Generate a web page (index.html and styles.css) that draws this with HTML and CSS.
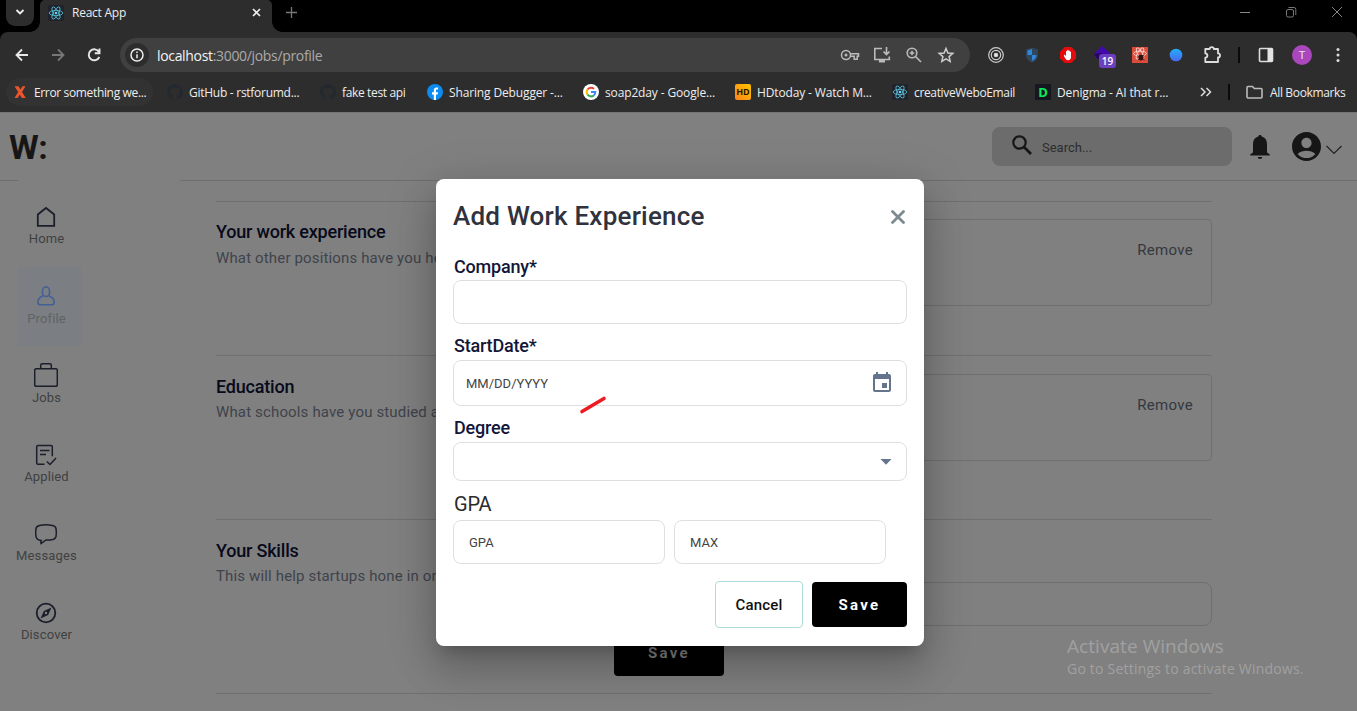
FILE: index.html
```html
<!DOCTYPE html>
<html lang="en">
<head>
<meta charset="utf-8">
<title>React App</title>
<link rel="stylesheet" href="styles.css">
</head>
<body>
<svg class="defs" width="0" height="0" aria-hidden="true">
  <symbol id="react" viewBox="0 0 16 16"><rect width="16" height="16" rx="1.5" fill="#20232a"/><g fill="none" stroke="#5cc4de" stroke-width=".8"><ellipse cx="8" cy="8" rx="6.8" ry="2.6"/><ellipse cx="8" cy="8" rx="6.8" ry="2.6" transform="rotate(60 8 8)"/><ellipse cx="8" cy="8" rx="6.8" ry="2.6" transform="rotate(120 8 8)"/></g><circle cx="8" cy="8" r="1.3" fill="#61dafb"/></symbol>
  <symbol id="github" viewBox="0 0 16 16"><path fill="#24292f" d="M8 0C3.58 0 0 3.58 0 8c0 3.54 2.29 6.53 5.47 7.59.4.07.55-.17.55-.38v-1.33c-2.23.48-2.7-1.07-2.7-1.07-.36-.93-.89-1.18-.89-1.18-.72-.5.06-.49.06-.49.8.06 1.23.83 1.23.83.71 1.22 1.87.87 2.33.66.07-.52.28-.87.5-1.07-1.77-.2-3.64-.89-3.64-3.95 0-.87.31-1.59.82-2.15-.08-.2-.36-1.02.08-2.12 0 0 .67-.21 2.2.82a7.6 7.6 0 0 1 4 0c1.53-1.04 2.2-.82 2.2-.82.44 1.1.16 1.92.08 2.12.51.56.82 1.27.82 2.15 0 3.07-1.87 3.75-3.65 3.95.29.25.54.73.54 1.48v2.19c0 .21.15.46.55.38A8 8 0 0 0 16 8c0-4.42-3.58-8-8-8z"/></symbol>
</svg>

<header class="browser">
  <div class="tabstrip">
    <div class="tab-search"><svg width="10" height="8" viewBox="0 0 10 8"><path d="M1.5 2 5 5.5 8.500 2" fill="none" stroke="#eee" stroke-width="1.8"/></svg></div>
    <div class="tab">
      <svg width="16" height="16"><use href="#react"/></svg>
      <span class="tab-title">React App</span>
      <svg class="tab-close" width="9" height="9" viewBox="0 0 9 9"><path d="M1 1l7 7M8 1L1 8" stroke="#eee" stroke-width="1.6"/></svg>
    </div>
    <svg class="tab-new" width="11" height="11" viewBox="0 0 11 11"><path d="M5.500 0v11M0 5.500h11" stroke="#777" stroke-width="1.300"/></svg>
    <div class="window-controls">
      <svg width="12" height="12" viewBox="0 0 12 12"><path d="M1 6.500h10" stroke="#888"/></svg>
      <svg width="12" height="12" viewBox="0 0 12 12" fill="none" stroke="#777"><rect x="1.500" y="3.500" width="7" height="7.500" rx="1.500"/><path d="M3.500 1.500H9a1.800 1.800 0 0 1 1.800 1.800V9"/></svg>
      <svg width="12" height="12" viewBox="0 0 12 12"><path d="M1 1l10 10M11 1 1 11" stroke="#888" stroke-width="1"/></svg>
    </div>
  </div>

  <div class="toolbar">
    <div class="nav-buttons">
      <svg width="16" height="16" viewBox="0 0 16 16" fill="none" stroke="#e8e8e8" stroke-width="1.800"><path d="M14 8H3M8 2.500 2.500 8 8 13.500"/></svg>
      <svg width="16" height="16" viewBox="0 0 16 16" fill="none" stroke="#777" stroke-width="1.800"><path d="M2 8h11M8 2.500 13.500 8 8 13.500"/></svg>
      <svg width="16" height="16" viewBox="0 0 16 16" fill="none" stroke="#e8e8e8" stroke-width="1.900"><path d="M13 5A5.500 5.500 0 1 0 13.300 10M13.500 1.500v4.700H8.800"/></svg>
    </div>
    <div class="omnibox">
      <span class="site-info"><svg width="14" height="14" viewBox="0 0 14 14"><circle cx="7" cy="7" r="6" fill="none" stroke="#eee" stroke-width="1.500"/><path d="M7 6.200v4M7 3.500v1.500" stroke="#eee" stroke-width="1.500"/></svg></span>
      <span class="url"><b>localhost</b>:3000/jobs/profile</span>
      <span class="omni-icons">
        <svg width="20" height="20" viewBox="0 0 20 20" fill="none" stroke="#bbb" stroke-width="1.500"><circle cx="6" cy="10" r="4.500"/><circle cx="6" cy="10" r="1.500" fill="#bbb" stroke="none"/><path d="M10 8.800h8.500v2.500h-1.300v3h-3v-3H10"/></svg>
        <svg width="20" height="20" viewBox="0 0 20 20" fill="none" stroke="#bbb" stroke-width="1.600"><path d="M10 3.500H2.800v11h14.500v-3M14.500 2v7M11.500 6.500l3 3 3-3"/><path d="M7 14.500h6v3H7z" fill="#bbb" stroke="none"/></svg>
        <svg width="20" height="20" viewBox="0 0 20 20" fill="none" stroke="#bbb" stroke-width="1.600"><circle cx="8" cy="8" r="4.800"/><path d="M11.500 11.500l5.500 5.500"/><path d="M8 5.700v4.600M5.700 8h4.600" stroke-width="1.500"/></svg>
        <svg width="20" height="20" viewBox="0 0 20 20" fill="none" stroke="#ccc" stroke-width="1.500"><path d="M10 3.500l1.900 4.500 4.900.4-3.700 3.200 1.100 4.800L10 13.900 5.800 16.400l1.100-4.800-3.700-3.200L8.100 8z"/></svg>
      </span>
    </div>
    <div class="extensions">
      <svg width="18" height="18" viewBox="0 0 18 18" fill="none" stroke="#ccc" stroke-width="1.200"><circle cx="9" cy="9" r="7.300"/><circle cx="9" cy="9" r="4.700"/><circle cx="9" cy="9" r="1.700" fill="#eee"/></svg>
      <svg width="16" height="16" viewBox="0 0 16 16"><path d="M8 .5 2 2.500V8c0 3.700 2.700 6.300 6 7.700 3.300-1.400 6-4 6-7.700V2.500z" fill="#31465a"/><path d="M8 2v6H3.500V3.500zM8 8h4.500c0 3-2 5-4.500 6z" fill="#2e87d8"/></svg>
      <svg width="16" height="16" viewBox="0 0 16 16"><path d="M4.700 0h6.600L16 4.700v6.600L11.300 16H4.700L0 11.300V4.700z" fill="#e30b0b"/><path d="M4.500 7.500 6 9V4.500a.6.6 0 0 1 1.200 0V3.400a.6.600 0 0 1 1.300 0v.7a.6.600 0 0 1 1.300 0v1a.6.600 0 0 1 1.200 0V10c0 2-1 3.200-2.800 3.200-1.900 0-2.500-1-4.400-4.500z" fill="#fff"/></svg>
      <span class="ext-badged"><svg width="18" height="14" viewBox="0 0 18 14"><path d="M9 0l8 7-6 6H4L1 8z" fill="#4209ad"/><path d="M1 8l8-1v6H5z" fill="#230759"/></svg><span class="badge">19</span></span>
      <svg width="16" height="16" viewBox="0 0 16 16"><rect width="16" height="16" fill="#dc4c3c"/><g fill="none" stroke="#f8d8d2" stroke-width=".9"><ellipse cx="8" cy="6.500" rx="6.500" ry="2.300"/><ellipse cx="8" cy="6.500" rx="6.300" ry="2.300" transform="rotate(60 8 6.500)"/><ellipse cx="8" cy="6.500" rx="6.300" ry="2.300" transform="rotate(120 8 6.500)"/></g><ellipse cx="9" cy="10.500" rx="2.500" ry="3" fill="#35120e"/><path d="M5.500 8.500l7 4.500M6 13l6-5" stroke="#35120e" stroke-width=".8"/></svg>
      <svg width="14" height="14" viewBox="0 0 14 14"><defs><linearGradient id="blue" x2="0" y2="1"><stop stop-color="#22aef5"/><stop offset="1" stop-color="#4a69f5"/></linearGradient></defs><circle cx="7" cy="7" r="6.300" fill="url(#blue)"/></svg>
      <svg width="20" height="20" viewBox="0 0 20 20" fill="none" stroke="#ddd" stroke-width="1.800" stroke-linejoin="round"><path d="M3.300 4h4.400c0-2.600 4.100-2.600 4.100 0H16v4.400c2.700 0 2.700 4 0 4V17H3.300v-4.300c2.800-.3 2.800-4.100 0-4.400z"/></svg>
    </div>
    <i class="divider"></i>
    <div class="profile-tools">
      <svg width="16" height="16" viewBox="0 0 16 16"><rect x="1.500" y="1.500" width="13" height="13" rx="1" fill="none" stroke="#ddd" stroke-width="1.600"/><path d="M9.500 1.500h5v13h-5z" fill="#e4e4e4"/></svg>
      <span class="avatar">T</span>
      <svg width="4" height="16" viewBox="0 0 4 16" fill="#ddd"><circle cx="2" cy="2.500" r="1.500"/><circle cx="2" cy="8" r="1.500"/><circle cx="2" cy="13.500" r="1.500"/></svg>
    </div>
  </div>

  <nav class="bookmarks">
    <a class="bm bm-hot"><svg width="16" height="16" viewBox="0 0 16 16"><path d="M2.500 2.200h4l2 3.300 2-3.300h3L10 8l3.800 6h-4l-2-3.300L5.500 14h-3L6.200 8z" fill="#ea552b"/></svg><span>Error something we...</span></a>
    <a class="bm bm-mid"><svg width="16" height="16"><use href="#github"/></svg><span>GitHub - rstforumd...</span></a>
    <a class="bm"><svg width="16" height="16"><use href="#github"/></svg><span>fake test api</span></a>
    <a class="bm bm-wide"><svg width="16" height="16" viewBox="0 0 16 16"><circle cx="8" cy="8" r="8" fill="#0c8bf0"/><path d="M6.800 16v-5.400H5V8.200h1.800V6.500c0-2 1.100-3 2.800-3l1.500.1v2h-1c-.9 0-1.100.5-1.100 1.100v1.500h2l-.3 2.400H9V16z" fill="#fff"/></svg><span>Sharing Debugger -...</span></a>
    <a class="bm bm-wide"><svg width="16" height="16" viewBox="0 0 16 16" fill="none" stroke-width="2"><circle cx="8" cy="8" r="8" fill="#fff"/><path d="M4.500 5.500A4.300 4.300 0 0 1 11 4.900" stroke="#ea4335"/><path d="M4.500 5.500a4.500 4.500 0 0 0 0 5" stroke="#fbbc05"/><path d="M4.500 10.500a4.300 4.300 0 0 0 6.300.900" stroke="#34a853"/><path d="M8 8h4.300c0 1.500-.5 2.600-1.500 3.400" stroke="#4285f4"/></svg><span>soap2day - Google...</span></a>
    <a class="bm bm-wide"><span class="hd">HD</span><span>HDtoday - Watch M...</span></a>
    <a class="bm"><svg width="16" height="16"><use href="#react"/></svg><span>creativeWeboEmail</span></a>
    <a class="bm bm-wide"><span class="dn">D</span><span>Denigma - AI that r...</span></a>
    <svg class="more" width="12" height="10" viewBox="0 0 12 10" fill="none" stroke="#ddd" stroke-width="1.500"><path d="M1 1l4 4-4 4M6.500 1l4 4-4 4"/></svg>
    <i class="divider"></i>
    <a class="bm"><svg width="17" height="16" viewBox="0 0 17 16" fill="none" stroke="#bbb" stroke-width="1.600"><path d="M1 3.500q0-1 1-1h4.500l1.800 2H15q1 0 1 1V13q0 1-1 1H2q-1 0-1-1z"/></svg><span class="all">All Bookmarks</span></a>
  </nav>
</header>

<div class="page">
  <header class="site-header">
    <span class="logo">W:</span>
    <div class="search"><svg width="20" height="20" viewBox="0 0 20 20" fill="none" stroke="#161616" stroke-width="2.200"><circle cx="7.500" cy="7.500" r="6.200"/><path d="M12 12l7 7" stroke-width="2.600"/></svg><span>Search...</span></div>
    <svg class="bell" width="20" height="26" viewBox="0 0 20 26" fill="#161616"><path d="M10 1c1 0 1.700.7 1.700 1.600C15 3.500 17 6.200 17 10v8.500l2.700 1.700v1.300H.3v-1.300L3 18.500V10c0-3.800 2-6.500 5.300-7.400C8.300 1.700 9 1 10 1zM7.800 23h4.400c0 1-.8 2-2.200 2s-2.200-1-2.200-2z"/></svg>
    <svg class="account" width="29" height="29" viewBox="2 2 20 20" fill="#161616"><path d="M12 2C6.480 2 2 6.480 2 12s4.480 10 10 10 10-4.480 10-10S17.520 2 12 2zm0 4c1.930 0 3.500 1.570 3.500 3.500S13.930 13 12 13s-3.500-1.570-3.500-3.500S10.070 6 12 6zm0 14c-2.030 0-4.430-.82-6.140-2.880C7.550 15.800 9.680 15 12 15s4.450.8 6.140 2.120C16.430 19.180 14.030 20 12 20z"/></svg>
    <svg class="caret" width="18" height="10" viewBox="0 0 18 10" fill="none" stroke="#222" stroke-width="1.200"><path d="M1.500 1 9 8.500 16.500 1"/></svg>
  </header>

  <div class="site-body">
    <aside class="sidebar">
      <a class="side-item"><svg width="24" height="24" viewBox="0 0 24 24"><path d="M3.800 9.500 12 3l8.200 6.500v11.300H3.800z" stroke-width="1.800"/></svg><span>Home</span></a>
      <a class="side-item active"><svg width="24" height="24" viewBox="0 0 24 24"><rect x="8.500" y="3" width="7" height="9.500" rx="3.500"/><path d="M8.800 12C6 13 3.800 15.500 3.800 18.300q0 2.500 2.500 2.500h11.400q2.500 0 2.500-2.500c0-2.800-2.200-5.300-5-6.300"/></svg><span>Profile</span></a>
      <a class="side-item jobs"><svg width="24" height="26" viewBox="0 0 24 26"><rect x=".7" y="6.700" width="22.600" height="17.600" rx="1.500"/><path d="M6.700 6.500V3.200q0-1.500 1.500-1.500h7.600q1.500 0 1.500 1.500v3.300"/></svg><span>Jobs</span></a>
      <a class="side-item"><svg width="24" height="24" viewBox="0 0 24 24"><path d="M10.500 21.300H4q-1.300 0-1.300-1.300V3.700q0-1.300 1.300-1.300h13q1.300 0 1.300 1.300v9.500M6 7.500h9.500M6 11.500h6M12.800 18.500l3.200 3 6-6.500"/></svg><span>Applied</span></a>
      <a class="side-item"><svg width="24" height="24" viewBox="0 0 24 24"><path d="M5.500 3.500c4-1 9-1 13 0q3 .5 3.500 3 .7 4 0 8-.5 2.300-3 3-4 .8-7 .5L7 21.500q-.5-1.300.2-3Q2.500 18 2 14.500q-.7-4 0-8 .5-2.300 3.500-3z"/></svg><span>Messages</span></a>
      <a class="side-item"><svg width="24" height="24" viewBox="0 0 24 24"><circle cx="12" cy="12" r="9.300" stroke-width="1.800"/><path d="M17.500 6.500l-3.400 7.600-7.600 3.400 3.400-7.600z" fill="#1b1e2b" stroke="none"/><circle cx="12" cy="12" r="1.200" fill="#808080" stroke="none"/></svg><span>Discover</span></a>
    </aside>
    <main class="content">
      <section class="row row-work">
        <div class="intro"><h2>Your work experience</h2><p>What other positions have you held?</p></div>
        <div class="entry"><a>Remove</a></div>
      </section>
      <section class="row row-education">
        <div class="intro"><h2>Education</h2><p>What schools have you studied at?</p></div>
        <div class="entry"><a>Remove</a></div>
      </section>
      <section class="row row-skills">
        <div class="intro"><h2>Your Skills</h2><p>This will help startups hone in on your skills.</p></div>
        <div class="skills"><div class="skill-input"></div><div class="page-save">Save</div></div>
      </section>
      <section class="row row-end"></section>
    </main>
  </div>

  <div class="watermark"><div class="wm-title">Activate Windows</div><div class="wm-text">Go to Settings to activate Windows.</div></div>

  <div class="dialog">
    <div class="dialog-head"><h1>Add Work Experience</h1><svg width="14" height="14" viewBox="0 0 14 14"><path d="M1.500 1.500l11 11M12.500 1.500l-11 11" stroke="#7d8b90" stroke-width="2.800" stroke-linecap="round"/></svg></div>
    <div class="label first">Company*</div>
    <div class="field"></div>
    <div class="label">StartDate*</div>
    <div class="field date"><span>MM/DD/YYYY</span><svg width="24" height="24" viewBox="0 0 24 24" fill="#64748b"><path d="M17 12h-5v5h5v-5zM16 1v2H8V1H6v2H5c-1.110 0-1.990.9-1.990 2L3 19c0 1.100.89 2 2 2h14c1.100 0 2-.9 2-2V5c0-1.100-.9-2-2-2h-1V1h-2zm3 18H5V8h14v11z"/></svg></div>
    <div class="label">Degree</div>
    <div class="field select"><svg width="12" height="6" viewBox="0 0 12 6"><path d="M.5 0h11L6 5.700z" fill="#64748b"/></svg></div>
    <div class="label gpa">GPA</div>
    <div class="pair"><div class="field small">GPA</div><div class="field small">MAX</div></div>
    <div class="actions"><button class="cancel">Cancel</button><button class="save">Save</button></div>
    <svg class="stroke" width="30" height="20" viewBox="0 0 30 20"><path d="M4 16.500 26 3.500" stroke="#ed1c24" stroke-width="3.600" stroke-linecap="round"/></svg>
  </div>
</div>
</body>
</html>
```
FILE: styles.css
```css
* { box-sizing: border-box; }
body { margin: 0; width: 1357px; height: 711px; overflow: hidden; background: #808080; font-family: Roboto, sans-serif; }
h1, h2, p { margin: 0; }
svg { display: block; flex: none; }
.defs { position: absolute; }

.browser { height: 112px; background: #000; color: #eee; font-family: "Open Sans", "Noto Sans", sans-serif; font-size: 12px; }
.tabstrip { display: flex; height: 32px; background: #000; }
.tab-search { width: 28px; height: 26px; margin-left: 6px; background: #2d2d2d; border-radius: 0 0 9px 9px; display: flex; justify-content: center; padding-top: 8px; }
.tab { position: relative; width: 232px; height: 32px; margin-left: 6px; padding: 0 11px 7px 8px; background: #2d2d2d; display: flex; align-items: center; gap: 8px; border-radius: 5px 5px 0 0; }
.tab::before, .tab::after { content: ""; position: absolute; bottom: 0; width: 10px; height: 10px; }
.tab::before { left: -10px; background: radial-gradient(circle at 0 0, transparent 9.5px, #2d2d2d 10px); }
.tab::after { right: -10px; background: radial-gradient(circle at 100% 0, transparent 9.5px, #2d2d2d 10px); }
.tab-title { flex: 1; letter-spacing: -.25px; }
.tab-new { margin: 7px 0 0 14px; }
.window-controls { margin-left: auto; padding: 6px 14px 0 0; display: flex; gap: 34px; }

.toolbar { height: 43px; padding-top: 3px; background: #2d2d2d; border-radius: 8px 8px 0 0; display: flex; align-items: center; }
.nav-buttons { display: flex; gap: 20px; margin-left: 14px; }
.omnibox { width: 850px; height: 34px; margin-left: 18px; padding: 0 14px 0 5px; background: #404040; border-radius: 17px; display: flex; align-items: center; }
.site-info { width: 24px; height: 24px; border-radius: 50%; background: #2d2d2d; display: flex; align-items: center; justify-content: center; }
.url { margin-left: 8px; font-size: 14px; letter-spacing: -.33px; color: #aaa; }
.url b { font-weight: 400; color: #f4f4f4; }
.omni-icons { margin-left: auto; display: flex; gap: 12px; }
.extensions { display: grid; grid-template-columns: repeat(7, 36px); margin-left: 8px; justify-items: center; align-items: center; }
.ext-badged { position: relative; }
.ext-badged svg { margin: -4px 4px 0 0; }
.badge { position: absolute; left: 6px; top: 4px; width: 17px; height: 14px; border-radius: 3px; background: #6b3fc0; color: #fff; font-size: 10px; font-weight: 600; line-height: 14px; text-align: center; }
.divider { width: 2px; height: 16px; background: #0a0a0a; margin-left: 8px; }
.profile-tools { flex: 1; display: flex; align-items: center; margin-left: 18px; }
.avatar { width: 20px; height: 20px; margin: 0 24px 0 18px; border-radius: 50%; background: #ab47bc; text-align: center; line-height: 20px; font-size: 11px; }

.bookmarks { height: 37px; padding: 0 0 3px 12px; background: #2d2d2d; display: grid; grid-template-columns: 155px 153px 107px 156px 152px 157px 143px 165px 28px 18px 1fr; align-items: center; }
.bm { display: flex; align-items: center; gap: 6px; white-space: nowrap; letter-spacing: -.35px; }
.bm-mid { letter-spacing: -.27px; }
.bm-wide { letter-spacing: -.14px; }
.bm-hot { height: 28px; margin-left: -6px; padding-left: 6px; width: 147px; border-radius: 14px; background: #323232; }
.bookmarks .divider { margin-left: 0; }
.all { margin-left: 1px; }
.hd, .dn { width: 16px; height: 16px; line-height: 16px; text-align: center; font-weight: 700; }
.hd { border-radius: 2px; background: linear-gradient(45deg, #ff8418, #ffc400); color: #2a1800; font-size: 9px; }
.dn { background: #15191f; color: #0bea5f; font-size: 13px; }

.page { position: relative; height: 599px; overflow: hidden; }
.site-header { height: 69px; border-bottom: 1px solid #6e6e6e; border-top: 1px solid #747474; display: flex; align-items: flex-start; }
.logo { width: 992px; padding-left: 9px; font-size: 34px; font-weight: 700; line-height: 68px; letter-spacing: -.5px; color: #161616; }
.search { width: 240px; height: 39px; margin-top: 14px; padding-left: 20px; border-radius: 8px; background: #6c6c6c; display: flex; align-items: center; gap: 10px; font-size: 13px; color: #2d2d2d; }
.search svg { margin-top: -3px; }
.search span { padding-top: 1px; }
.bell { margin: 21px 0 0 18px; }
.account { margin: 19px 0 0 22px; }
.caret { margin: 32px 0 0 4px; }
.site-body { display: flex; }
.sidebar { position: relative; width: 162px; height: 532px; margin: -1px 0 0 18px; padding-top: 8px; background: #808080; }
.side-item { width: 64px; height: 79px; padding: 18px 7px 0 0; display: flex; flex-direction: column; align-items: center; gap: 2px; font-size: 13px; line-height: 15px; letter-spacing: .15px; color: #404040; }
.side-item svg { margin-left: -1px; fill: none; stroke: #1b1e2b; stroke-width: 1.500; }
.side-item:first-child { padding-top: 17px; }
.side-item.active { background: #7b7e82; color: #606366; }
.side-item.active svg { margin-top: -1px; margin-bottom: 1px; stroke: #425f96; }
.side-item.jobs { padding-top: 16px; }
.content { width: 996px; margin-left: 36px; padding-top: 20px; }
.row { border-top: 1px solid #6f6f6f; display: flex; }
.row-work { height: 154px; }
.row-education { height: 164px; }
.row-skills { height: 174px; }
.row-end { height: 18px; }
.intro { width: 284px; padding-top: 18px; white-space: nowrap; }
.intro h2 { font-size: 18px; font-weight: 500; line-height: 24px; letter-spacing: -.2px; color: #070a1b; }
.intro p { padding-top: 4px; font-size: 15px; line-height: 20px; letter-spacing: .15px; color: #3f434b; }
.row-education .intro, .row-skills .intro { padding-top: 19px; }
.row-education p, .row-skills p { padding-top: 3px; }
.entry { width: 712px; height: 87px; margin-top: 17px; padding: 20px 18px; border: 1px solid #6f6f6f; border-radius: 4px; text-align: right; font-size: 15px; line-height: 20px; letter-spacing: .3px; color: #34383f; }
.row-education .entry { margin-top: 18px; }
.skills { width: 712px; padding-top: 62px; }
.skill-input { height: 44px; border: 1px solid #6f6f6f; border-radius: 8px; }
.page-save { width: 110px; height: 46px; margin: 4px 0 0 114px; border-radius: 4px; background: #000; color: #808080; text-align: center; font-size: 15px; font-weight: 700; line-height: 46px; letter-spacing: 2.3px; }
.watermark { position: absolute; left: 1067px; top: 522px; color: #a0a0a0; font-family: "Open Sans", "Noto Sans", sans-serif; white-space: nowrap; }
.wm-title { font-size: 19px; line-height: 25px; letter-spacing: .06px; }
.wm-text { font-size: 14px; line-height: 20px; letter-spacing: .21px; }

.dialog { position: absolute; left: 436px; top: 67px; width: 488px; height: 467px; padding: 0 17px; border-radius: 8px; background: #fff; box-shadow: 0 11px 15px -7px rgba(0,0,0,.2), 0 24px 38px 3px rgba(0,0,0,.14), 0 9px 46px 8px rgba(0,0,0,.12); }
.dialog-head { height: 74px; padding: 0 1px 0 0; display: flex; align-items: center; justify-content: space-between; }
.dialog-head h1 { font-size: 26px; font-weight: 500; letter-spacing: .22px; color: #30323d; }
.dialog-head svg { margin: 2px 1px 0 0; }
.label { height: 27px; margin-top: 9px; padding-left: 1px; line-height: 25px; font-size: 18px; font-weight: 500; letter-spacing: -.2px; color: #121638; }
.label.first { margin-top: 0; line-height: 27px; }
.label.gpa { height: 30px; line-height: 29px; font-size: 20px; font-weight: 400; color: #2b2b2b; }
.field { height: 44px; border: 1px solid #dedfe0; border-radius: 8px; display: flex; align-items: center; font-size: 13px; color: #444; }
.field.date { height: 46px; padding: 0 12px; justify-content: space-between; }
.field.select { height: 39px; padding-right: 14px; justify-content: flex-end; }
.pair { display: flex; gap: 9px; }
.field.small { width: 212px; padding-left: 15px; }
.actions { height: 47px; margin-top: 17px; display: flex; align-items: center; justify-content: flex-end; gap: 9px; }
.actions button { padding: 0; font-family: Roboto, sans-serif; font-size: 15px; border-radius: 4px; }
.cancel { width: 88px; height: 47px; border: 1px solid #aedadb; background: #fff; color: #111; font-weight: 500; letter-spacing: .2px; }
.save { width: 95px; height: 45px; border: 0; background: #000; color: #fff; font-weight: 700; letter-spacing: 2.3px; }
.stroke { position: absolute; left: 142px; top: 216px; }
```
